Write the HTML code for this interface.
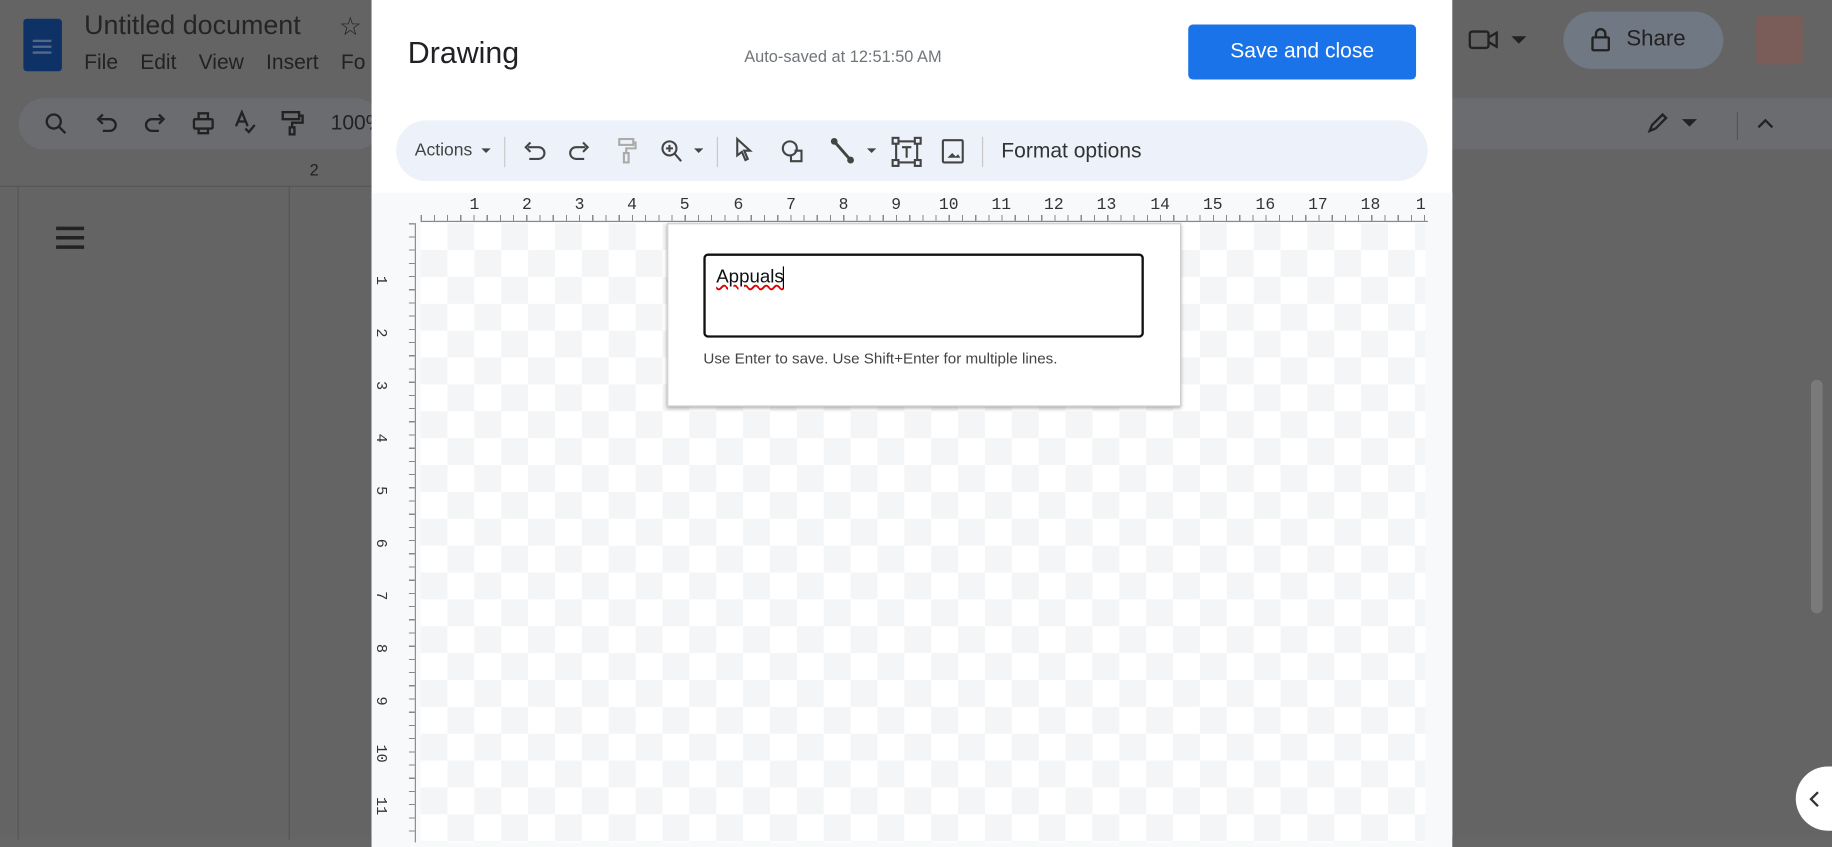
<!DOCTYPE html>
<html><head><meta charset="utf-8"><style>
*{margin:0;padding:0;box-sizing:border-box}
body{width:1832px;height:836px;overflow:hidden;background:#666;font-family:"Liberation Sans",Arial,sans-serif}
#w{width:1568px;height:716px;transform:scale(1.16837);transform-origin:0 0;position:relative;background:#646464}
.a{position:absolute}
.g{color:#222}
.hn{position:absolute;top:168px;font-family:'Liberation Mono',monospace;font-size:14px;color:#333;transform:translateX(-50%)}
.vn{position:absolute;left:326px;font-family:'Liberation Mono',monospace;font-size:13px;color:#333;transform:translate(-50%,-50%) rotate(90deg)}
</style></head><body><div id="w">
<!-- docs background -->
<div class="a" style="left:20px;top:16px;width:33px;height:45px;background:#0e3166;border-radius:3px"></div>
<div class="a" style="left:28px;top:34px;width:16px;height:2px;background:#56688a;box-shadow:0 5px 0 #56688a,0 10px 0 #56688a"></div>
<div class="a g" style="left:72px;top:8px;font-size:23px;color:#252525">Untitled document</div>
<div class="a g" style="left:290px;top:10px;font-size:22px">☆</div>
<div class="a g" style="left:72px;top:43px;font-size:18px;word-spacing:14px">File Edit View Insert Fo</div>
<div class="a" style="left:16px;top:84px;width:310px;height:44px;background:#6a6c6f;border-radius:22px"></div>
<svg class="a" style="left:30px;top:90px" width="290" height="32" fill="none" stroke="#222" stroke-width="2">
<circle cx="16" cy="14" r="6"/><path d="M20 18l6 6"/>
<path d="M56 12h8a5 5 0 010 10h-6M58 8l-4 4 4 4"/>
<path d="M108 12h-8a5 5 0 000 10h6M106 8l4 4-4 4"/>
<rect x="136" y="12" width="16" height="8" rx="1"/><path d="M140 12V7h8v5M140 20v4h8v-4"/>
<path d="M172 18l5-12 5 12M174 14h6M180 20l3 3 5-6"/>
<rect x="212" y="6" width="14" height="6"/><path d="M226 9h3v6h-9v4"/><rect x="218" y="19" width="4" height="6"/>
</svg>
<div class="a g" style="left:283px;top:95px;font-size:18px">100%</div>
<div class="a" style="left:1243px;top:84px;width:330px;height:44px;background:#6a6c6f"></div>
<svg class="a" style="left:1256px;top:22px" width="60" height="26" fill="none" stroke="#222" stroke-width="2"><rect x="2" y="5" width="16" height="14" rx="2"/><path d="M18 10l7-4v12l-7-4"/><path d="M40 10l4 4 4-4z" fill="#222"/></svg>
<div class="a" style="left:1338px;top:10px;width:137px;height:49px;background:#6f7883;border-radius:25px"></div>
<svg class="a" style="left:1360px;top:22px" width="20" height="24" fill="none" stroke="#222" stroke-width="2"><rect x="3" y="10" width="14" height="11" rx="1"/><path d="M6 10V7a4 4 0 018 0v3"/></svg>
<div class="a g" style="left:1392px;top:23px;font-size:19px">Share</div>
<div class="a" style="left:1503px;top:13px;width:40px;height:42px;background:#7a5c58;border-radius:4px"></div>
<svg class="a" style="left:1405px;top:92px" width="120" height="28" fill="none" stroke="#222" stroke-width="2"><path d="M7 20l2-5 9-9 3 3-9 9z"/><path d="M37 11l4 4 4-4z" fill="#222"/><path d="M82 4v24" stroke="#555" stroke-width="1"/><path d="M100 17l6-6 6 6"/></svg>
<div class="a" style="left:0;top:159px;width:318px;height:1px;background:#555"></div>
<div class="a" style="left:247px;top:159px;width:1px;height:560px;background:#555"></div>
<div class="a" style="left:15px;top:159px;width:1px;height:560px;background:#555"></div>
<div class="a g" style="left:265px;top:137px;font-size:14px">2</div>
<div class="a" style="left:48px;top:194px;width:24px;height:3px;background:#222;box-shadow:0 8px 0 #222,0 16px 0 #222"></div>
<div class="a" style="left:1550px;top:325px;width:10px;height:200px;background:#7a7a7a;border-radius:5px"></div>
<div class="a" style="left:1537px;top:656px;width:40px;height:55px;background:#fff;border-radius:28px 0 0 28px"></div>
<svg class="a" style="left:1545px;top:672px" width="16" height="24" fill="none" stroke="#333" stroke-width="2"><path d="M11 6l-6 6 6 6"/></svg>
<!-- dialog -->
<div class="a" style="left:318px;top:0;width:925px;height:716px;background:#fff">
 <div class="a" style="left:31px;top:30px;font-size:26px;color:#202124">Drawing</div>
 <div class="a" style="left:319px;top:40px;font-size:14px;color:#70757a">Auto-saved at 12:51:50 AM</div>
 <div class="a" style="left:699px;top:21px;width:195px;height:47px;background:#1a73e8;border-radius:4px;color:#fff;font-size:18px;text-align:center;line-height:45px">Save and close</div>
 <div class="a" style="left:21px;top:103px;width:883px;height:52px;background:#edf2fa;border-radius:26px"></div>
 <div class="a" style="left:37px;top:120px;font-size:15px;color:#444">Actions</div>
 <svg class="a" style="left:0;top:103px" width="925" height="52" fill="none" stroke="#444" stroke-width="1.8">
  <path d="M94 24l4 4 4-4z" fill="#444" stroke="none"/>
  <path d="M114 14v26M296 14v26M523 14v26" stroke="#c7c7c7" stroke-width="1"/>
  <path d="M134 23h9a5 5 0 010 10h-8M136 19l-4 4 4 4"/>
  <path d="M183 23h-8a5 5 0 000 10h7M181 19l4 4-4 4"/>
  <g stroke="#aaa"><rect x="212" y="16" width="12" height="5"/><path d="M224 19h2v5h-8v4"/><rect x="216" y="28" width="4" height="8"/></g>
  <circle cx="255" cy="24" r="6"/><path d="M259 28l6 7M252 24h6M255 21v6"/>
  <path d="M276 24l4 4 4-4z" fill="#444" stroke="none"/>
  <path d="M313 16l11 10h-5l3 7-2 1-3-7-4 3z"/>
  <circle cx="358" cy="24" r="6"/><path d="M362 26h6v9h-9v-5"/>
  <path d="M396 18l14 16" stroke-width="2.5"/><circle cx="396" cy="18" r="2" fill="#444"/><circle cx="410" cy="34" r="2" fill="#444"/>
  <path d="M424 24l4 4 4-4z" fill="#444" stroke="none"/>
  <rect x="449" y="18" width="18" height="18"/><rect x="446" y="15" width="5" height="5" fill="#edf2fa"/><rect x="465" y="15" width="5" height="5" fill="#edf2fa"/><rect x="446" y="34" width="5" height="5" fill="#edf2fa"/><rect x="465" y="34" width="5" height="5" fill="#edf2fa"/><path d="M454 23h8M458 23v9"/>
  <rect x="489" y="17" width="17" height="19" rx="1"/><path d="M493 32l4-4 3 3 2-2 2 3z" fill="#444" stroke="none"/>
 </svg>
 <div class="a" style="left:539px;top:119px;font-size:18px;color:#333">Format options</div>
 <div class="a" style="left:0;top:165px;width:925px;height:560px;background:#f8f9fa"></div>
 <div class="a" style="left:42px;top:191px;width:860px;height:530px;background-color:#fff;background-image:conic-gradient(#f4f5f6 25%,#fff 0 50%,#f4f5f6 0 75%,#fff 0);background-size:46px 46px"></div>
 <div class="a" style="left:42px;top:180px;width:862px;height:10px;border-bottom:1px solid #888;background:repeating-linear-gradient(90deg,#888 0 1px,transparent 1px 11.3px) bottom/100% 5px no-repeat"></div>
 <div class="a" style="left:19px;top:191px;width:19px;height:530px;border-right:1px solid #888;background:repeating-linear-gradient(180deg,#888 0 1px,transparent 1px 11.3px) right/5px 100% no-repeat"></div>
 <div class="a" style="left:253px;top:191px;width:440px;height:157px;background:#fff;box-shadow:0 1px 3px rgba(0,0,0,.35);border:1px solid #ccc"></div>
 <div class="a" style="left:284px;top:217px;width:377px;height:72px;border:2px solid #111;border-radius:4px;background:#fff"></div>
 <div class="a" style="left:295px;top:229px;font-size:16px;color:#111;text-decoration:underline wavy #d00">Appuals</div>
 <div class="a" style="left:352px;top:228px;width:1px;height:19px;background:#000"></div>
 <div class="a" style="left:284px;top:299px;font-size:13px;color:#444">Use Enter to save. Use Shift+Enter for multiple lines.</div>
</div>
<span class="hn" style="left:406px">1</span><span class="hn" style="left:451px">2</span><span class="hn" style="left:496px">3</span><span class="hn" style="left:541px">4</span><span class="hn" style="left:586px">5</span><span class="hn" style="left:632px">6</span><span class="hn" style="left:677px">7</span><span class="hn" style="left:722px">8</span><span class="hn" style="left:767px">9</span><span class="hn" style="left:812px">10</span><span class="hn" style="left:857px">11</span><span class="hn" style="left:902px">12</span><span class="hn" style="left:947px">13</span><span class="hn" style="left:993px">14</span><span class="hn" style="left:1038px">15</span><span class="hn" style="left:1083px">16</span><span class="hn" style="left:1128px">17</span><span class="hn" style="left:1173px">18</span><span class="hn" style="left:1216px">1</span>
<span class="vn" style="top:240px">1</span><span class="vn" style="top:285px">2</span><span class="vn" style="top:330px">3</span><span class="vn" style="top:375px">4</span><span class="vn" style="top:420px">5</span><span class="vn" style="top:465px">6</span><span class="vn" style="top:510px">7</span><span class="vn" style="top:555px">8</span><span class="vn" style="top:600px">9</span><span class="vn" style="top:645px">10</span><span class="vn" style="top:690px">11</span>
</div></body></html>
